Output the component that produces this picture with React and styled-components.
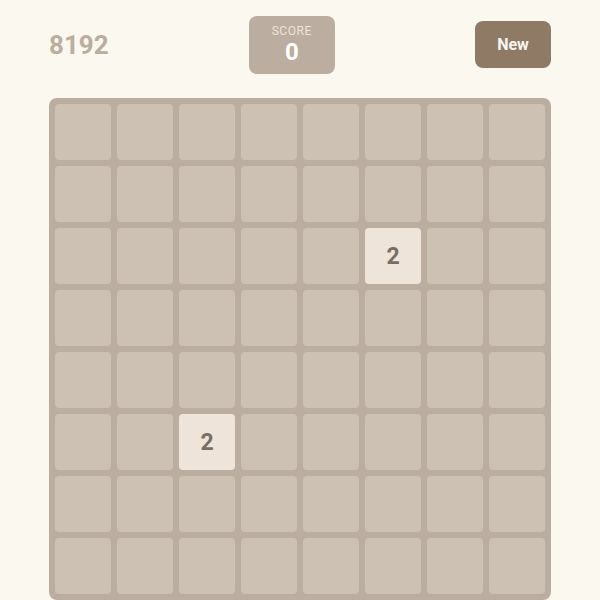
import styled, { createGlobalStyle } from "styled-components";

const GlobalStyle = createGlobalStyle`
  html, body {
    margin: 0;
    padding: 0;
    background: #faf8ef;
    font-family: Roboto, "Liberation Sans", sans-serif;
  }
`;

const SIZE = 8;
const tiles = { "2-5": 2, "5-2": 2 };

const Page = () => {
  const cells = [];
  for (let r = 0; r < SIZE; r++) {
    for (let c = 0; c < SIZE; c++) {
      const v = tiles[`${r}-${c}`];
      cells.push(
        <Cell key={`${r}-${c}`} value={v}>
          {v || ""}
        </Cell>
      );
    }
  }

  return (
    <Wrapper>
      <Header>
        <Goal>8192</Goal>
        <ScoreBox>
          <ScoreLabel>SCORE</ScoreLabel>
          <ScoreValue>0</ScoreValue>
        </ScoreBox>
        <NewButton>New</NewButton>
      </Header>
      <Board>{cells}</Board>
    </Wrapper>
  );
};

export default function App() {
  return (
    <>
      <GlobalStyle />
      <Page />
    </>
  );
}

const Wrapper = styled.div`
  display: flex;
  flex-direction: column;
  gap: 24px;
  padding: 16px 49px 0;
  width: 502px;
`;

const Header = styled.div`
  display: flex;
  align-items: center;
  justify-content: space-between;
  height: 58px;
`;

const Goal = styled.div`
  font-size: 26px;
  font-weight: 700;
  color: #bbada0;
`;

const ScoreBox = styled.div`
  width: 86px;
  height: 58px;
  box-sizing: border-box;
  background: #bbada0;
  border-radius: 8px;
  display: flex;
  flex-direction: column;
  align-items: center;
  justify-content: center;
  gap: 2px;
  padding-bottom: 2px;
`;

const ScoreLabel = styled.div`
  font-size: 12px;
  letter-spacing: 0.6px;
  color: #eee4da;
  line-height: 14px;
`;

const ScoreValue = styled.div`
  font-size: 24px;
  font-weight: 700;
  color: #fff;
  line-height: 24px;
`;

const NewButton = styled.button`
  width: 76px;
  height: 47px;
  margin-top: -2px;
  border: none;
  border-radius: 8px;
  background: #8f7a66;
  color: #f9f6f2;
  font-family: inherit;
  font-size: 16px;
  font-weight: 700;
  padding: 0;
`;

const Board = styled.div`
  display: grid;
  grid-template-columns: repeat(8, 56px);
  grid-auto-rows: 56px;
  gap: 6px;
  padding: 6px;
  background: #bbada0;
  border-radius: 8px;
  width: 490px;
`;

const Cell = styled.div`
  border-radius: 4px;
  background: ${(p) => (p.value ? "#eee4da" : "#cdc1b4")};
  color: #776e65;
  display: flex;
  align-items: center;
  justify-content: center;
  font-size: 23px;
  font-weight: 700;
`;
